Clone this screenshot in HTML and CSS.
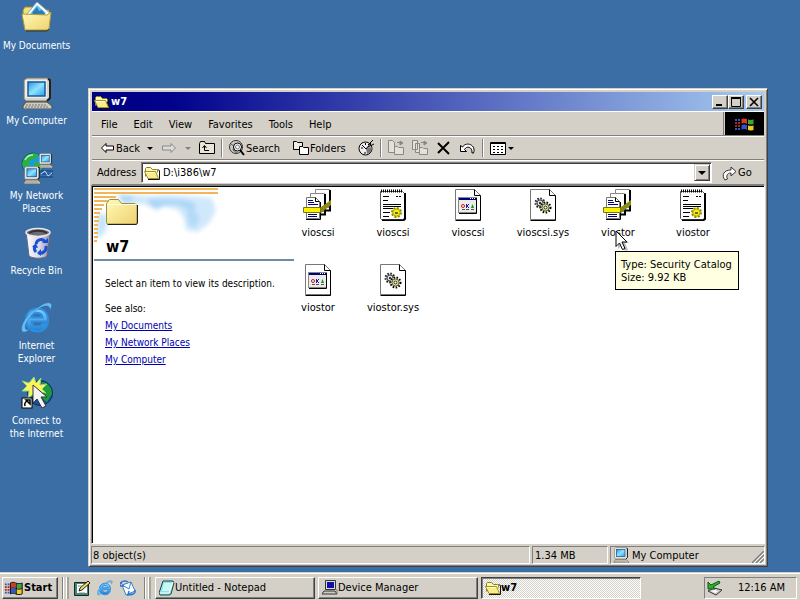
FILE: index.html
```html
<!DOCTYPE html>
<html lang="en">
<head>
    <meta charset="UTF-8">
    <meta name="viewport" content="width=device-width, initial-scale=1.0">
    <title>w7</title>
    <link rel="stylesheet" href="styles.css">
</head>
<body>
    <!-- Shared icons -->
    <svg class="sprite" aria-hidden="true">
        <defs>
            <linearGradient id="g-screen" x1="0" y1="0" x2="1" y2="1">
                <stop offset="0" stop-color="#2f8fe8"/>
                <stop offset=".5" stop-color="#8fe4ff"/>
                <stop offset="1" stop-color="#2a9bea"/>
            </linearGradient>
            <linearGradient id="g-folder" x1="0" y1="0" x2="1" y2="1">
                <stop offset="0" stop-color="#fffbb8"/>
                <stop offset="1" stop-color="#f0d070"/>
            </linearGradient>
            <linearGradient id="g-ie" x1="0" y1="0" x2="0" y2="1">
                <stop offset="0" stop-color="#7fd4ff"/>
                <stop offset="1" stop-color="#1c80d8"/>
            </linearGradient>
            <linearGradient id="g-bin" x1="0" y1="0" x2="1" y2="0">
                <stop offset="0" stop-color="#fff"/>
                <stop offset=".6" stop-color="#d4d4e4"/>
                <stop offset="1" stop-color="#8c8ca4"/>
            </linearGradient>
        </defs>
        <symbol id="i-folder" viewBox="0 0 16 16">
            <path d="M1.500 11.500v-8l1-1h4l2 2h4l1 1v2" fill="#fff7a8" stroke="#8a8020"/>
            <path d="M.5 6.500h11l3 7H4z" fill="#f8ee88" stroke="#a09030"/>
            <path d="M2 7.500h9" stroke="#fffde0"/>
            <path d="M4 14.500h11.500v-9l-2-1" fill="none" stroke="#111"/>
        </symbol>
        <symbol id="i-pc" viewBox="0 0 32 32">
            <path d="M3 3l3-2h20l3 2v18l-3 3H5l-2-2z" fill="#d8d4c8" stroke="#77756c"/>
            <path d="M27 2l2 1v18l-3 3" fill="none" stroke="#222" stroke-width="2"/>
            <path d="M4 3h22v18H4z" fill="#efede6"/>
            <rect x="7" y="5" width="17" height="14" fill="url(#g-screen)" stroke="#155a9c" stroke-width="1.500"/>
            <path d="M5 25h21l5 4v3H2v-3z" fill="#cfcabc" stroke="#4c4a44"/>
            <path d="M5 28h20M4 30h23" stroke="#77756c" stroke-dasharray="2 1"/>
        </symbol>
        <symbol id="i-ie" viewBox="0 0 32 32">
            <path d="M27 19.500H10.500c.3 3 2.600 5 5.700 5 2.500 0 4.300-1 5.300-2.800h5.200C25.200 26.700 21.300 29.500 16.200 29.500 9.500 29.500 4.800 24.700 4.800 18S9.500 6.500 16.200 6.500 27.500 11.200 27 19.500zM21.600 15.500c-.4-2.900-2.500-4.500-5.500-4.500s-5.100 1.600-5.600 4.500z" fill="url(#g-ie)" stroke="#2f8ede" stroke-width="2"/>
            <path d="M18 5C23 .500 29.500-.5 30.500 2.500c.5 2-.5 4-1.500 6 0-3-1-5-4.500-4.500-8 1-18 12-20 19-1 4 .5 6 5 4-5 4-9 4.500-9 0C.500 20 9 9 18 5z" fill="#66bdf2" stroke="#1b66b4" stroke-width=".4"/>
        </symbol>
        <symbol id="i-winflag" viewBox="0 0 22 16">
            <path d="M7 3c2-1 4-1 6 0v5c-2-1-4-1-6 0z" fill="#d83a20"/>
            <path d="M14 3c2 1 4 1 6 0v5c-2 1-4 1-6 0z" fill="#3fa43c"/>
            <path d="M7 9c2-1 4-1 6 0v5c-2-1-4-1-6 0z" fill="#3354cc"/>
            <path d="M14 9c2 1 4 1 6 0v5c-2 1-4 1-6 0z" fill="#f0cc20"/>
            <path d="M7 2.500c2-1 4-1 6 0s5 1 7 0v12c-2 1-5 1-7 0s-4-1-6 0zM13.500 3v12M7 8.500c2-1 4-1 6 0s5 1 7 0" fill="none" stroke="#000"/>
            <path d="M1 4h2m1 0h2M1 13h2m1 0h2" stroke="#3354cc" stroke-width="2"/>
            <path d="M1 7h2m1 0h2M1 10h2m1 0h2" stroke="#b02020" stroke-width="2"/>
        </symbol>
        <symbol id="i-catalog" viewBox="0 0 32 32">
            <path d="M13.500.5h14v18h-14z" fill="#fff" stroke="#888"/>
            <path d="M28 1v20.500h-5" fill="none" stroke="#000" stroke-width="2"/>
            <path d="M8.500 4.500h14v18h-14z" fill="#fff" stroke="#888"/>
            <path d="M23 5v20.500h-5" fill="none" stroke="#000" stroke-width="2"/>
            <path d="M19 18l10-7v5l-10 8z" fill="#8b8a12"/>
            <path d="M4.500 8.500h9l4 4v17h-13z" fill="#fff" stroke="#777"/>
            <path d="M13.500 8.500v4h4M18.500 13v17.500H4" fill="none" stroke="#000"/>
            <path d="M6 11.500h5M6 13.500h6M6 15.500h10M6 25.500h9M6 27.500h9" stroke="#00007c"/>
            <path d="M1.500 18.500h17v5h-17z" fill="#fff200" stroke="#77770a"/>
        </symbol>
        <symbol id="i-inf" viewBox="0 0 32 32">
            <path d="M3.500 2.500h22l2 2v25l-2 1h-21l-1-1z" fill="#fff" stroke="#555"/>
            <path d="M28 4v26l-2 1.500H5" fill="none" stroke="#000" stroke-width="2"/>
            <path d="M4 2h22" stroke="#000" stroke-width="3" stroke-dasharray="1 1"/>
            <path d="M6 7.500h6M6 11.500h5M6 15.500h18M6 17.500h18M6 19.500h10M6 23.500h7M6 27.500h6" stroke="#000"/>
            <path d="M19 7.500h6" stroke="#000" stroke-dasharray="2 1"/>
            <circle cx="19.500" cy="23.500" r="4.500" fill="#f6ee20" stroke="#8a8800" stroke-width="2" stroke-dasharray="2 1.500"/>
            <circle cx="19.500" cy="23.500" r="3.500" fill="#f6ee20" stroke="#b0aa00"/>
            <rect x="18" y="23" width="3" height="2" fill="#6c6a00"/>
        </symbol>
        <symbol id="i-page" viewBox="0 0 32 32">
            <path d="M3.500.5h19l6 6v24h-25z" fill="#fff" stroke="#777"/>
            <path d="M22.500.5v6h6v25h-25" fill="none" stroke="#000"/>
        </symbol>
        <symbol id="i-setup" viewBox="0 0 32 32">
            <use href="#i-page"/>
            <rect x="6.500" y="8.500" width="18" height="15" fill="#ecebe6" stroke="#888"/>
            <path d="M24.500 9v15.500H7" fill="none" stroke="#000"/>
            <path d="M7 10h17" stroke="#00007c" stroke-width="2"/>
            <path d="M18 9.500h6" stroke="#fff" stroke-dasharray="1 1"/>
            <circle cx="11" cy="17" r="1.500" fill="#fff" stroke="#c01818"/>
            <path d="M14.500 15v4M15 17l2-2M15 17l2 2" stroke="#1818c0"/>
            <path d="M19 19l1.500-4 1.500 4z" fill="#109030"/>
            <path d="M10 20.500h3m1 0h3m2 0h3" stroke="#555"/>
        </symbol>
        <symbol id="i-sys" viewBox="0 0 32 32">
            <use href="#i-page"/>
            <circle cx="13" cy="14" r="4.500" fill="#ccc" stroke="#222" stroke-width="2" stroke-dasharray="1.500 1.500"/>
            <circle cx="13" cy="14" r="3" fill="#ddd" stroke="#444"/>
            <circle cx="13" cy="14" r="1" fill="#000"/>
            <circle cx="18.500" cy="18.500" r="5" fill="#f4efa0" stroke="#000" stroke-width="2" stroke-dasharray="1.500 1.500"/>
            <circle cx="18.500" cy="18.500" r="3.500" fill="#f4efa0" stroke="#555"/>
            <circle cx="18.500" cy="18.500" r="1.500" fill="#fff" stroke="#222"/>
        </symbol>
    </svg>

    <main class="desktop">
        <ul class="desktop-icons">
            <li><button class="shortcut">
                <svg viewBox="0 0 32 32">
                    <path d="M2 8l2-3h8l2 3h14v10H2z" fill="#f2df80" stroke="#9a8a2c"/>
                    <path d="M16 0L30 12 20 22 6 12z" fill="#fff" stroke="#8aa"/>
                    <path d="M16 3l9 8-7 7-9-6z" fill="#5fc0f4"/>
                    <path d="M11 11l5-6 2 4 3-1 3 4-5 5z" fill="#2c7cae"/>
                    <path d="M1 12l25 1 4-3-2 17-2 1H4z" fill="url(#g-folder)" stroke="#b09c38"/>
                    <path d="M28 27l-2 2H5" fill="none" stroke="#3c3610"/>
                </svg>
                <span>My Documents</span></button></li>
            <li><button class="shortcut">
                <svg viewBox="0 0 32 32"><use href="#i-pc"/></svg>
                <span>My Computer</span></button></li>
            <li><button class="shortcut">
                <svg viewBox="0 0 32 32">
                    <circle cx="12" cy="12" r="11" fill="#1d9bd8" stroke="#0d5c68"/>
                    <path d="M3 7c3-5 9-7 14-5l-3 5-5 1-1 5-5 3-2-4zM14 10l6 1 2 5-5 2-4-3z" fill="#2eb03c"/>
                    <path d="M4 8c2-4 5-5 8-5" fill="none" stroke="#b8f2b0" stroke-width="1.500"/>
                    <path d="M19 19h13M21 22h11M19 25h13" stroke="#0c3c84"/>
                    <path d="M20 22l4-3 3 5 4-3" fill="none" stroke="#b9d8ff"/>
                    <svg x="17" y="1" width="15" height="15"><use href="#i-pc"/></svg>
                    <svg x="2" y="14" width="18" height="18"><use href="#i-pc"/></svg>
                </svg>
                <span>My Network Places</span></button></li>
            <li><button class="shortcut">
                <svg viewBox="0 0 32 32">
                    <path d="M5 4l3 25c4 3 15 3 18 0l3-22z" fill="url(#g-bin)" stroke="#66667c"/>
                    <ellipse cx="17" cy="5.500" rx="12" ry="4" fill="#6c6c74" stroke="#e8e8f0" stroke-width="1.500"/>
                    <path d="M8 6c5-3 13-3 18 0" fill="none" stroke="#333" stroke-width="2"/>
                    <g fill="none" stroke="#1c50d0" stroke-width="3">
                        <path d="M15 17c1-5 7-6 9-2"/>
                        <path d="M25 19c1 5-4 8-7 7"/>
                        <path d="M15 25c-2-2-2-4-1-6"/>
                    </g>
                    <path d="M21 16h6v-5zM20 22v7l-4-3zM11 20l4-4 2 5z" fill="#1c50d0"/>
                </svg>
                <span>Recycle Bin</span></button></li>
            <li><button class="shortcut">
                <svg viewBox="0 0 32 32"><use href="#i-ie"/></svg>
                <span>Internet Explorer</span></button></li>
            <li><button class="shortcut">
                <svg viewBox="0 0 32 32">
                    <circle cx="19" cy="16" r="12.500" fill="#1450a4" stroke="#0a2c4c"/>
                    <path d="M21 5c7 1 10 6 10 12l-5 8-5-4 3-6-5-4z" fill="#1f9a38"/>
                    <path d="M13 0l2 6 5-5-1 7 7-1-5 5 4 4-7-1-1 7-4-5-6 4 1-7-7 0 5-5-5-5 7 2z" fill="#fff25c" stroke="#7fdc7c"/>
                    <path d="M12 8v18l4-4 5 9 4-2-5-9h6z" fill="#f4f4f4" stroke="#333"/>
                    <rect x="1" y="21" width="10" height="10" fill="#fff" stroke="#000"/>
                    <path d="M4 29c-1-3 1-5 3-5M5 23h4v4z" fill="none" stroke="#000" stroke-width="1.500"/>
                </svg>
                <span>Connect to<br>the Internet</span></button></li>
        </ul>

        <section class="window">
            <header class="titlebar">
                <svg class="icon16" viewBox="0 0 16 16"><use href="#i-folder"/></svg>
                <h1>w7</h1>
                <button class="caption-btn" aria-label="Minimize"><svg viewBox="0 0 10 10"><path d="M1 8h6" stroke="#000" stroke-width="2"/></svg></button>
                <button class="caption-btn" aria-label="Maximize"><svg viewBox="0 0 10 10"><path d="M.5 1v8.500h9V1" fill="none" stroke="#000"/><path d="M0 1h10" stroke="#000" stroke-width="2"/></svg></button>
                <button class="caption-btn close" aria-label="Close"><svg viewBox="0 0 10 10"><path d="M1 1l8 8M9 1L1 9" stroke="#000" stroke-width="1.600"/></svg></button>
            </header>

            <div class="menu-row">
                <nav class="menubar">
                    <button>File</button>
                    <button>Edit</button>
                    <button>View</button>
                    <button>Favorites</button>
                    <button>Tools</button>
                    <button>Help</button>
                </nav>
                <div class="brand"><svg viewBox="0 0 22 16"><use href="#i-winflag"/></svg></div>
            </div>

            <div class="toolbar">
                <button class="tool tool-back">
                    <svg class="icon16" viewBox="0 0 16 16"><path d="M1.500 8L6 3.500V6h7.500v4H6v2.500z" fill="#fff" stroke="#000"/></svg>Back
                </button>
                <button class="tool tool-drop" aria-label="Back history"><span class="arrow"></span></button>
                <button class="tool" aria-label="Forward" disabled>
                    <svg class="icon16" viewBox="0 0 16 16"><path d="M14.500 8L10 3.500V6H1.500v4H10v2.500z" fill="#ddd" stroke="#888"/></svg>
                </button>
                <button class="tool tool-drop off" aria-label="Forward history" disabled><span class="arrow"></span></button>
                <button class="tool" aria-label="Up">
                    <svg class="icon16" viewBox="0 0 16 16"><path d="M.5 13.500v-10l1-2h4l1 2h9v10z" fill="#e8e6d8" stroke="#000"/><path d="M5.500 6v4.500H10M3.500 8l2-2.500 2 2.500" fill="none" stroke="#000"/></svg>
                </button>
                <span class="sep"></span>
                <button class="tool tool-search">
                    <svg class="icon16" viewBox="0 0 16 16"><circle cx="7" cy="7" r="6.500" fill="#ccc" stroke="#333"/><path d="M2 4l3 2-1 4 4 3" fill="none" stroke="#555"/><circle cx="8.500" cy="7" r="4" fill="#fff" stroke="#000"/><circle cx="8.500" cy="7" r="2" fill="none" stroke="#777"/><path d="M11 10l4 5" stroke="#000" stroke-width="2"/></svg>Search
                </button>
                <button class="tool tool-folders">
                    <svg class="icon16" viewBox="0 0 16 16"><path d="M.5 9.500v-8h3l1 1h5v7z" fill="#f0eee4" stroke="#000"/><path d="M6.500 14.500v-8h3l1 1h5v7z" fill="#fff" stroke="#000"/></svg>Folders
                </button>
                <button class="tool" aria-label="History">
                    <svg class="icon16" viewBox="0 0 16 16"><circle cx="7.500" cy="8.500" r="6.500" fill="#eee" stroke="#000"/><path d="M8 8l6-1-1 5-4 2z" fill="#777"/><path d="M7.500 3v2M3 8h2M7 12v2M4 5l4 4 5-6" fill="none" stroke="#000"/><path d="M10 5l5-5M10 7l6-3" stroke="#000"/></svg>
                </button>
                <span class="sep"></span>
                <button class="tool" aria-label="Move To" disabled>
                    <svg class="icon16" viewBox="0 0 16 16"><path d="M.5 12.500v-12h4l2 2v10zM6.500 14.500v-8h3l1 1h5v7z" fill="#e4e1d8" stroke="#888"/><path d="M9 2.500h5M12 1v4l3-2z" stroke="#888" fill="#888"/></svg>
                </button>
                <button class="tool" aria-label="Copy To" disabled>
                    <svg class="icon16" viewBox="0 0 16 16"><path d="M.5 9.500v-9h5v9zM3.500 12.500v-9h4v9zM7.500 14.500v-7h3l1 1h4v6z" fill="#e4e1d8" stroke="#888"/><path d="M9 2.500h5M12 1v4l3-2z" stroke="#888" fill="#888"/></svg>
                </button>
                <button class="tool" aria-label="Delete">
                    <svg class="icon16" viewBox="0 0 16 16"><path d="M2 3l11 11M13 2L2 13" stroke="#000" stroke-width="2"/></svg>
                </button>
                <button class="tool" aria-label="Undo">
                    <svg class="icon16" viewBox="0 0 16 16"><path d="M.5 5.500v6h6l-2-2c2-4 8-3 7.500 3.500h1.500c3-8-7-12-11-6z" fill="#fff" stroke="#000"/></svg>
                </button>
                <span class="sep"></span>
                <button class="tool tool-views" aria-label="Views">
                    <svg class="icon16" viewBox="0 0 16 16"><path d="M.5 2.500h15v12H.5z" fill="#fff" stroke="#000"/><path d="M1 3h14" stroke="#000" stroke-width="2"/><path d="M3 6.500h10M3 9.500h10M3 12.500h10" stroke="#000" stroke-dasharray="2 2"/></svg><span class="arrow"></span>
                </button>
            </div>

            <div class="address-row">
                <label for="address">Address</label>
                <div class="combo">
                    <svg class="icon16" viewBox="0 0 16 16"><use href="#i-folder"/></svg>
                    <input id="address" type="text" value="D:\i386\w7">
                    <button class="combo-btn" aria-label="Show addresses"><span class="arrow"></span></button>
                </div>
                <button class="go">
                    <svg class="icon16" viewBox="0 0 16 16"><path d="M3 15c-4-5-1-10 6-10V2l5 4.500L9 11V8C5 8 4 11 5.500 14z" fill="#fff" stroke="#333"/></svg>Go
                </button>
            </div>

            <div class="content">
                <aside class="info">
                    <div class="banner">
                        <svg class="clouds" viewBox="0 0 200 56" aria-hidden="true">
                            <filter id="soft"><feGaussianBlur stdDeviation="2"/></filter>
                            <g filter="url(#soft)">
                                <path d="M22 6l36 2 14-1 20 1 26 2 4 12-6 12-12 10-12-2-2-12-6-8-14-4-8 4-12-6-20 1z" fill="#d0e8fb"/>
                                <path d="M26 7l14 1-2 5-10 1zM54 11l16 0 20 1 10 3 2 6-6 6-4-6-8-4-10 0-12 4-6-4z" fill="#acd6f7"/>
                                <path d="M92 18l8 2 6 12-6 8-6-4z" fill="#b4daf8"/>
                                <path d="M4 24l10 4-2 14-6 8-4-4z" fill="#c8e6fa"/>
                            </g>
                            <path d="M0 1h124M0 5h124M0 9h22M0 13h14M0 17h10M0 21h8M0 25h6M0 29h5M0 33h5M0 37h4M0 41h4M0 45h4M0 49h4M0 53h3" stroke="#f3b55c" stroke-width="2"/>
                        </svg>
                        <svg class="big-folder" viewBox="0 0 34 30" aria-hidden="true">
                            <path d="M1.500 26V6.500l3-4h9l3 4H30l2 2V26l-1 1H2.500z" fill="url(#g-folder)" stroke="#9c8c44"/>
                            <path d="M32.500 8v18l-1 1.500h-29" fill="none" stroke="#222"/>
                            <path d="M2.500 7.500h29" stroke="#fffde4"/>
                        </svg>
                        <h2>w7</h2>
                    </div>
                    <div class="info-text">
                        <p>Select an item to view its description.</p>
                        <p class="see-also">See also:</p>
                        <ul>
                            <li><a href="#documents">My Documents</a></li>
                            <li><a href="#network">My Network Places</a></li>
                            <li><a href="#computer">My Computer</a></li>
                        </ul>
                    </div>
                </aside>

                <ul class="files">
                    <li><button class="file"><svg viewBox="0 0 32 32"><use href="#i-catalog"/></svg>vioscsi</button></li>
                    <li><button class="file"><svg viewBox="0 0 32 32"><use href="#i-inf"/></svg>vioscsi</button></li>
                    <li><button class="file"><svg viewBox="0 0 32 32"><use href="#i-setup"/></svg>vioscsi</button></li>
                    <li><button class="file"><svg viewBox="0 0 32 32"><use href="#i-sys"/></svg>vioscsi.sys</button></li>
                    <li>
                        <button class="file" aria-describedby="file-tip"><svg viewBox="0 0 32 32"><use href="#i-catalog"/></svg>viostor</button>
                        <div class="tooltip" id="file-tip" role="tooltip">Type: Security Catalog<br>Size: 9.92 KB</div>
                        <svg class="cursor" viewBox="0 0 14 22" aria-hidden="true">
                            <path d="M3 4v15l4-4 3 6 3-1-3-7h4z" fill="#000" opacity=".25"/>
                            <path d="M1 1v15.500l3.500-3.500 3 6.500 2.500-1L7 12h5z" fill="#fff" stroke="#000"/>
                        </svg>
                    </li>
                    <li><button class="file"><svg viewBox="0 0 32 32"><use href="#i-inf"/></svg>viostor</button></li>
                    <li><button class="file"><svg viewBox="0 0 32 32"><use href="#i-setup"/></svg>viostor</button></li>
                    <li><button class="file"><svg viewBox="0 0 32 32"><use href="#i-sys"/></svg>viostor.sys</button></li>
                </ul>
            </div>

            <footer class="statusbar">
                <span class="status-main">8 object(s)</span>
                <span class="status-size">1.34 MB</span>
                <span class="status-zone">
                    <svg class="icon16" viewBox="0 0 32 32"><use href="#i-pc"/></svg>My Computer
                    <svg class="grip" viewBox="0 0 12 12" aria-hidden="true">
                        <path d="M0 12L12 0M4 12l8-8M8 12l4-4" stroke="#808080" stroke-width="1.500"/>
                        <path d="M2 12L12 2M6 12l6-6M10 12l2-2" stroke="#fff"/>
                    </svg>
                </span>
            </footer>
        </section>
    </main>

    <footer class="taskbar">
        <button class="start"><svg viewBox="0 0 22 16"><use href="#i-winflag"/></svg>Start</button>
        <span class="handle"></span>
        <div class="quick">
            <button aria-label="Show Desktop"><svg class="icon16" viewBox="0 0 16 16"><path d="M.5 2.500h14v13H.5z" fill="#3a8a78" stroke="#222"/><path d="M3 4h10v9H3z" fill="#fff"/><path d="M5 11l1-3 8-7 2 2-8 7z" fill="#f0d860" stroke="#222"/><path d="M4 6h4M5 13h6" stroke="#888"/></svg></button>
            <button aria-label="Internet Explorer"><svg class="icon16" viewBox="0 0 32 32"><use href="#i-ie"/></svg></button>
            <button aria-label="Outlook Express"><svg class="icon16" viewBox="0 0 16 16"><path d="M2 5l9-3 4 9-9 4z" fill="#fff" stroke="#3a80c8"/><path d="M2 5l7 4 2-7" fill="none" stroke="#3a80c8"/><path d="M1 4c0-3 4-4 7-2M0 2v4h4M15 10c1 3-3 6-7 4M12 14l-4 1 1-4" fill="none" stroke="#2a78d8" stroke-width="1.500"/></svg></button>
        </div>
        <span class="handle"></span>
        <div class="tasks">
            <button class="task"><svg class="icon16" viewBox="0 0 16 16"><path d="M4 1h10l1 2-3 11-2 1H1l-1-2z" fill="#8fe0e0" stroke="#124a50"/><path d="M5 3h8l-2 8H3z" fill="#c8f8f4"/><path d="M1 13h9l4-11" fill="none" stroke="#fff"/></svg>Untitled - Notepad</button>
            <button class="task"><svg class="icon16" viewBox="0 0 16 16"><path d="M3.500.5h10v9h-10z" fill="#ddd" stroke="#333"/><path d="M5 2h7v6H5z" fill="#1010a8"/><path d="M2 11h11l2 3H0z" fill="#ccc" stroke="#333"/><path d="M13 9l2 1v4" fill="none" stroke="#777"/></svg>Device Manager</button>
            <button class="task active"><svg class="icon16" viewBox="0 0 16 16"><use href="#i-folder"/></svg>w7</button>
        </div>
        <div class="tray">
            <svg class="icon16" viewBox="0 0 16 16"><path d="M1 11l6-3 8 2-6 5z" fill="#ccc" stroke="#333"/><path d="M4 11l4-1 3 1-3 2z" fill="#fff"/><path d="M1 2v7h7L6 7l7-4-1-2-8 4z" fill="#2fae30" stroke="#0d5a12"/></svg>
            <time>12:16 AM</time>
        </div>
    </footer>
</body>
</html>
```
FILE: styles.css
```css
* {
    box-sizing: border-box;
}
body {
    display: flex;
    flex-direction: column;
    height: 100vh;
    margin: 0;
    overflow: hidden;
    background-color: #3a6ea5;
    color: #000;
    font-family: "DejaVu Sans Condensed", "DejaVu Sans", sans-serif;
    font-size: 11px;
    line-height: 13px;
    cursor: default;
}
ul {
    margin: 0;
    padding: 0;
    list-style: none;
}
button {
    padding: 0;
    border: none;
    background: none;
    color: inherit;
    font: inherit;
}
svg {
    display: block;
    flex: none;
}
.sprite {
    position: absolute;
    width: 0;
    height: 0;
}
.icon16 {
    width: 16px;
    height: 16px;
}
.arrow {
    border: 3px solid transparent;
    border-top-color: #000;
    border-bottom: none;
}

/* Desktop */
.desktop {
    position: relative;
    flex: 1;
    min-height: 0;
}
.desktop-icons {
    display: grid;
    grid-auto-rows: 75px;
    width: 73px;
    padding-top: 2px;
    font-size: 10px;
}
.shortcut {
    display: flex;
    flex-direction: column;
    align-items: center;
    gap: 5px;
    width: 100%;
    color: #fff;
}
.shortcut > svg {
    width: 32px;
    height: 32px;
}

/* Explorer window */
.window {
    position: absolute;
    top: 88px;
    right: 32px;
    bottom: 5px;
    left: 88px;
    display: flex;
    flex-direction: column;
    padding: 2px;
    border: 1px solid;
    border-color: #d4d0c8 #404040 #404040 #d4d0c8;
    box-shadow: inset 1px 1px #fff, inset -1px -1px #808080;
    background-color: #d4d0c8;
}
.titlebar {
    display: flex;
    align-items: center;
    height: 19px;
    margin: 1px;
    margin-bottom: 0;
    padding: 0 2px;
    background: linear-gradient(to right, #000082, #02028c 12%, #a6caf0);
    color: #fff;
}
.titlebar h1 {
    flex: 1;
    margin: 0 0 0 1px;
    font-size: 11px;
}
.caption-btn {
    display: flex;
    align-items: center;
    justify-content: center;
    width: 16px;
    height: 14px;
    border: 1px solid;
    border-color: #fff #404040 #404040 #fff;
    box-shadow: inset -1px -1px #808080;
    background-color: #d4d0c8;
}
.caption-btn svg {
    width: 10px;
    height: 10px;
}
.caption-btn.close {
    margin-left: 2px;
}
.menu-row {
    display: flex;
    height: 25px;
    margin: 0 1px;
    border-top: 1px solid #fff;
    border-bottom: 1px solid #808080;
}
.menubar {
    display: flex;
    flex: 1;
    align-items: center;
    gap: 16px;
    padding: 1px 0 0 9px;
    border-right: 1px solid #808080;
}
.brand {
    display: flex;
    align-items: center;
    justify-content: center;
    width: 39px;
    margin-left: 1px;
    background-color: #000;
}
.brand svg {
    width: 22px;
    height: 16px;
}
.toolbar {
    display: flex;
    align-items: center;
    height: 24px;
    margin: 0 1px;
    padding-left: 4px;
    border-top: 1px solid #fff;
    border-bottom: 1px solid #808080;
}
.tool {
    display: flex;
    align-items: center;
    gap: 1px;
    height: 20px;
    padding: 0 4px;
}
.tool-back {
    width: 47px;
    gap: 0;
}
.tool-drop {
    width: 14px;
}
.tool-drop.off .arrow {
    border-top-color: #808080;
}
.tool-search {
    width: 64px;
}
.tool-folders {
    width: 65px;
}
.tool-views {
    gap: 2px;
}
.sep {
    width: 2px;
    height: 18px;
    margin: 0 2px;
    border-left: 1px solid #808080;
    border-right: 1px solid #fff;
}
.address-row {
    display: flex;
    align-items: center;
    height: 25px;
    margin: 0 1px;
    padding-left: 5px;
    border-top: 1px solid #fff;
    border-bottom: 1px solid #808080;
}
.address-row label {
    width: 44px;
}
.combo {
    display: flex;
    flex: 1;
    align-items: center;
    height: 21px;
    padding: 1px;
    border: 1px solid;
    border-color: #808080 #fff #fff #808080;
    box-shadow: inset 1px 1px #404040;
    background-color: #fff;
}
.combo input {
    flex: 1;
    min-width: 0;
    padding: 0 3px;
    border: none;
    outline: none;
    background: none;
    font: inherit;
}
.combo-btn {
    display: flex;
    align-items: center;
    justify-content: center;
    width: 16px;
    height: 17px;
    border: 1px solid;
    border-color: #d4d0c8 #404040 #404040 #d4d0c8;
    box-shadow: inset 1px 1px #fff, inset -1px -1px #808080;
    background-color: #d4d0c8;
}
.combo .icon16 {
    margin-left: 1px;
}
.combo-btn .arrow {
    border-width: 4px;
    border-bottom: none;
}
.go {
    display: flex;
    align-items: center;
    width: 52px;
    padding-left: 10px;
}

/* Folder view */
.content {
    display: flex;
    flex: 1;
    min-height: 0;
    border: 1px solid;
    border-color: #808080 #fff #fff #808080;
    box-shadow: inset 1px 1px #000;
    background-color: #fff;
}
.info {
    width: 202px;
    padding: 2px 0 0 2px;
    font-size: 10px;
}
.banner {
    position: relative;
    padding: 9px 0 3px 11px;
    border-bottom: 2px solid #6c8ca8;
}
.clouds {
    position: absolute;
    top: 0;
    left: 0;
    width: 200px;
    height: 56px;
}
.big-folder {
    position: relative;
    width: 34px;
    height: 30px;
}
.banner h2 {
    position: relative;
    margin: 11px 0 0 1px;
    font-size: 16px;
    line-height: 18px;
}
.info-text {
    padding: 16px 0 0 11px;
}
.info-text p {
    margin: 0;
    white-space: nowrap;
}
.info-text .see-also {
    margin: 12px 0 2px;
}
.info-text li {
    line-height: 17px;
}
.info-text a {
    color: #0000b0;
}
.files {
    display: grid;
    flex: 1;
    grid-template-columns: repeat(auto-fill, 48px);
    grid-auto-rows: 75px;
    column-gap: 27px;
    padding-top: 3px;
}
.files li {
    position: relative;
}
.file {
    display: flex;
    flex-direction: column;
    align-items: center;
    gap: 5px;
    width: 100%;
    white-space: nowrap;
}
.file svg {
    width: 32px;
    height: 32px;
}
.tooltip {
    position: absolute;
    top: 62px;
    left: 21px;
    z-index: 1;
    padding: 6px 6px 5px 5px;
    border: 1px solid #000;
    background-color: #ffffe1;
    white-space: nowrap;
}
.cursor {
    position: absolute;
    top: 41px;
    left: 21px;
    z-index: 2;
    width: 14px;
    height: 22px;
}

/* Status bar */
.statusbar {
    display: flex;
    gap: 2px;
    padding-top: 2px;
}
.statusbar > span {
    display: flex;
    align-items: center;
    height: 18px;
    padding-left: 2px;
    border: 1px solid;
    border-color: #808080 #fff #fff #808080;
}
.statusbar .status-main {
    flex: 1;
    padding-left: 1px;
}
.status-size {
    width: 76px;
}
.status-zone {
    gap: 3px;
    width: 155px;
}
.grip {
    align-self: flex-end;
    width: 12px;
    height: 12px;
    margin-left: auto;
}

/* Taskbar */
.taskbar {
    display: flex;
    align-items: center;
    height: 28px;
    padding: 2px 3px 0 2px;
    border-top: 1px solid #d4d0c8;
    box-shadow: inset 0 1px #fff;
    background-color: #d4d0c8;
}
.start,
.task {
    display: flex;
    align-items: center;
    height: 22px;
    border: 1px solid;
    border-color: #fff #404040 #404040 #fff;
    box-shadow: inset -1px -1px #808080;
}
.start {
    width: 56px;
    padding-left: 1px;
    font-weight: bold;
}
.start svg {
    width: 20px;
    height: 16px;
}
.handle {
    width: 7px;
    height: 22px;
    margin: 0 4px;
    border-left: 1px solid #808080;
    box-shadow: inset 1px 0 #fff, inset -2px 0 #a8a49c, inset -3px 0 #fff;
}
.quick {
    display: flex;
    gap: 7px;
    width: 67px;
    padding-left: 1px;
}
.tasks {
    display: flex;
    flex: 1;
    gap: 3px;
}
.task {
    flex: 0 1 160px;
    padding-left: 3px;
}
.task.active {
    border-color: #404040 #fff #fff #404040;
    box-shadow: inset 1px 1px #808080;
    background: repeating-conic-gradient(#fff 0 25%, #d4d0c8 0 50%) 0 0 / 2px 2px;
    font-weight: bold;
}
.tray {
    display: flex;
    align-items: center;
    justify-content: space-between;
    width: 93px;
    height: 22px;
    padding: 0 11px 0 2px;
    border: 1px solid;
    border-color: #808080 #fff #fff #808080;
}
```
